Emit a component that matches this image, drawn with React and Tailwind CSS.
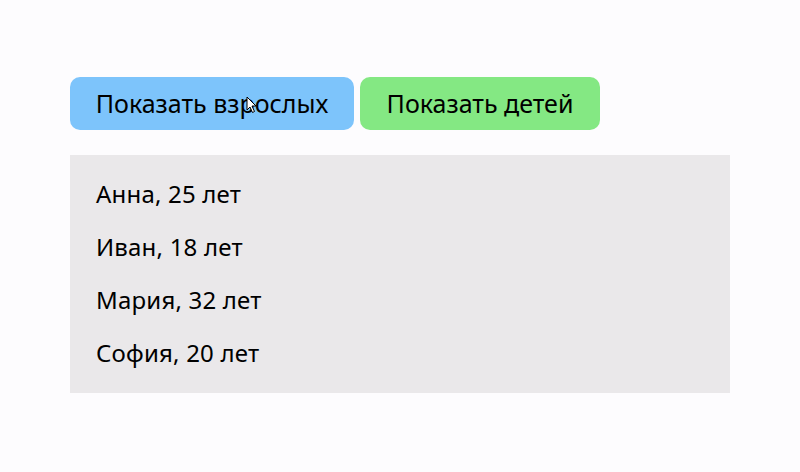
import React from "react";

export default function App() {
  const people = ["Анна, 25 лет", "Иван, 18 лет", "Мария, 32 лет", "София, 20 лет"];
  return (
    <div
      className="w-[800px] h-[472px] bg-[#fdfcfe] text-black pt-[77px] px-[70px]"
      style={{ fontFamily: '"Noto Sans", "DejaVu Sans", sans-serif' }}
    >
      <div className="flex gap-[6px] relative">
        <button className="w-[284px] h-[53px] rounded-[10px] bg-[#7dc4fb] text-[25px] flex items-center justify-center">
          Показать взрослых
        </button>
        <button className="w-[240px] h-[53px] rounded-[10px] bg-[#84e883] text-[25px] flex items-center justify-center">
          Показать детей
        </button>
        <svg
          className="absolute left-[176px] top-[19px]"
          width="12"
          height="18"
          viewBox="0 0 12 18"
        >
          <path d="M1 1 L1 14 L4 11 L6.5 16.5 L8.5 15.5 L6 10 L10 10 Z" fill="#fff" stroke="#000" strokeWidth="1" />
        </svg>
      </div>
      <div className="mt-[25px] w-[660px] bg-[#eae8ea] pt-[12px] pb-[14px] px-[26px]">
        {people.map((p) => (
          <div key={p} className="h-[53px] flex items-center text-[24px] tracking-[0.2px]">
            {p}
          </div>
        ))}
      </div>
    </div>
  );
}
